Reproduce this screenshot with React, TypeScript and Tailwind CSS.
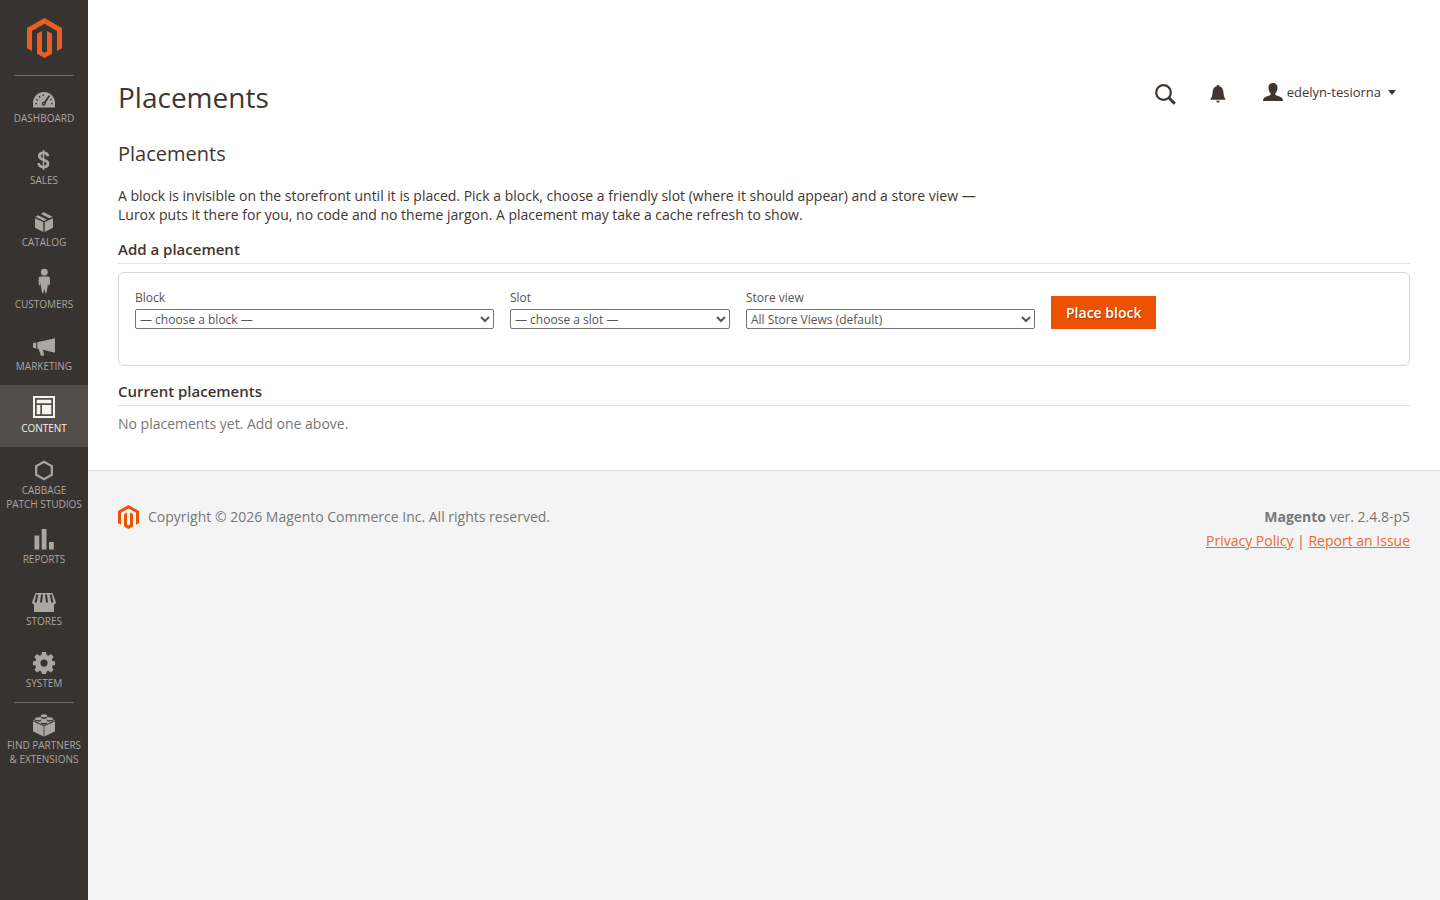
import type { ReactNode } from 'react';

type MenuItem = {
  id: string;
  label: string[];
  icon: ReactNode;
  active?: boolean;
  divider?: boolean;
};

const MENU: MenuItem[] = [
  {
    id: 'dashboard',
    label: ['Dashboard'],
    divider: true,
    icon: (
      <>
        <path d="M1 22.6V18a11 11 0 0 1 22 0v4.6z" />
        <g stroke="#373330" fill="none" strokeLinecap="round">
          <path d="M3.7 18.6h.8M4.7 14.6l.6.4M7.4 11.5l.4.6M11.2 10v.7M19.5 18.6h.8M19.2 14.3l-.5.4" strokeWidth="1.3" />
          <path d="M17 11.2l-5.2 7.6" strokeWidth="1.7" />
        </g>
        <circle cx="11.8" cy="18.8" r="2" fill="#373330" />
        <circle cx="11.8" cy="18.8" r=".7" />
      </>
    ),
  },
  {
    id: 'sales',
    label: ['Sales'],
    icon: (
      <g fill="none" stroke="currentColor">
        <path d="M16 9.2C15.6 7 14 5.9 11.5 5.9 9 5.9 7.3 7 7.3 9c0 4.8 8.6 2.7 8.600 7.500 0 2.300-1.900 3.500-4.400 3.500-2.800 0-4.600-1.300-4.900-3.900" strokeWidth="2.8" />
        <path d="M11.500 3v20" strokeWidth="1.600" />
      </g>
    ),
  },
  {
    id: 'catalog',
    label: ['Catalog'],
    icon: (
      <>
        <path d="M3 9.300l8.300 3.800V23L3 18.700z" />
        <path d="M21 9.300l-8.300 3.800V23L21 18.700z" />
        <path d="M3.400 7.700L6.200 6.300l8.600 4.200-2.800 1.400z" />
        <path d="M8.800 5L12 3.200l8.600 4.500-3.200 1.600z" />
      </>
    ),
  },
  {
    id: 'customers',
    label: ['Customers'],
    icon: (
      <>
        <circle cx="12.300" cy="1.200" r="3.400" />
        <path d="M8.700 5.600h7.200c1.300 0 2 .8 2 2v6.200l-1.500.9-.3-3.200-.5 4.300-1.200 6.400h-1l-1.100-4.400-1.100 4.400h-1L9 15.800l-.5-4.300-.3 3.200-1.500-.9V7.600c0-1.200.7-2 2-2z" />
      </>
    ),
  },
  {
    id: 'marketing',
    label: ['Marketing'],
    icon: (
      <>
        <path d="M1 10.100l3.300-.6v5.900l-3.300-.6z" />
        <path d="M5.300 9.200L23 5.300v14.400L11 16.800l1.200 5.800-3.100.4-2.500-7.100-1.300-.3z" />
      </>
    ),
  },
  {
    id: 'content',
    label: ['Content'],
    active: true,
    icon: (
      <>
        <path d="M1 1h22v22H1zM3 3v18h18V3z" fillRule="evenodd" />
        <path d="M4.700 4.700h14.600v3.600H4.700zM4.700 10h3.600v9.300H4.700zM10 10h9.300v9.300H10z" />
      </>
    ),
  },
  {
    id: 'cabbage',
    label: ['Cabbage', 'Patch Studios'],
    icon: <path d="M12 4.700l7.800 4.400v8.700L12 22.200l-7.800-4.400V9.100z" fill="none" stroke="currentColor" strokeWidth="2.200" />,
  },
  {
    id: 'reports',
    label: ['Reports'],
    icon: <path d="M2.500 9.500h4.800v14H2.500zM9.700 3h4.800v20.500H9.700zM17 16h4.800v7.500H17z" />,
  },
  {
    id: 'stores',
    label: ['Stores'],
    icon: (
      <>
        <path d="M3.500 5h17L24 14.200c-.3 1.500-1 2-2 2V24H2v-7.800c-1 0-1.700-.5-2-2z" />
        <path d="M5.400 6.500L3.500 14.500M10 6.500L9 14.500M14 6.500l1 8M18.600 6.500l1.900 8" fill="none" stroke="#373330" strokeWidth="2" />
      </>
    ),
  },
  {
    id: 'system',
    label: ['System'],
    icon: (
      <path
        fillRule="evenodd"
        d="M10 2h4l.7 3.100 1.500.7 2.700-1.800 2.800 2.800-1.800 2.700.6 1.500L23.100 11.600v3.300l-2.600.6-.6 1.500 1.800 2.700-2.800 2.800-2.700-1.700-1.500.6L14 24h-4l-.7-2.600-1.500-.6-2.700 1.700-2.800-2.800L4.100 17l-.6-1.500L.9 14.900v-3.300l2.600-.6.6-1.500L2.300 6.800 5.100 4l2.700 1.800 1.500-.7zM12 9.500a3.600 3.600 0 1 0 0 7.200 3.600 3.600 0 0 0 0-7.200z"
      />
    ),
  },
  {
    id: 'partners',
    label: ['Find Partners', '& Extensions'],
    divider: true,
    icon: (
      <>
        <path d="M1 9.200l10.600 5v10.300L1 19.200z" />
        <path d="M23 9.200l-10.600 5v10.300L23 19.200z" />
        <path d="M1.200 8.200L12 3.200l10.800 5L12 13.400z" />
        <g fill="#373330">
          <ellipse cx="12" cy="5.200" rx="3.200" ry="1.500" />
          <ellipse cx="6.200" cy="8" rx="3.200" ry="1.500" />
          <ellipse cx="17.800" cy="8" rx="3.200" ry="1.500" />
          <ellipse cx="12" cy="10.900" rx="3.200" ry="1.500" />
        </g>
        <ellipse cx="12" cy="3.800" rx="3.200" ry="1.500" />
        <ellipse cx="6.200" cy="6.700" rx="3.200" ry="1.500" />
        <ellipse cx="17.800" cy="6.700" rx="3.200" ry="1.500" />
        <ellipse cx="12" cy="9.600" rx="3.200" ry="1.500" />
      </>
    ),
  },
];

function Sidebar() {
  return (
    <nav aria-label="Main" className="w-[88px] shrink-0 bg-[#373330]">
      <a href="#home" aria-label="Magento Admin Panel" className="flex h-[75px] justify-center pt-[18px]">
        <svg viewBox="0 0 105 120" className="h-10 w-[35px]" fill="#eb5e23">
          <path d="M52.500 0L105 30v61l-15 8V39L52.500 17.500 15 39v60L0 91V30z" />
          <path d="M30 47l15-8v61l7.500 4.500L60 100V39l15 8v60l-22.500 13L30 107z" />
        </svg>
      </a>
      <ul>
        {MENU.map((item) => (
          <li key={item.id} className="min-h-[62px]">
            {item.divider && <div className="mx-3.5 -mb-px h-px bg-[#736963]" />}
            <a
              href={`#${item.id}`}
              aria-current={item.active ? 'page' : undefined}
              className={`flex min-h-[62px] flex-col items-center pt-2.5 pb-[5px] text-center text-[10px] leading-[14px] uppercase ${
                item.active ? 'bg-[#524d49] text-[#f7f3eb]' : 'text-[#aaa6a0]'
              }`}
            >
              <svg viewBox="0 0 24 24" className="mb-0.5 size-6 shrink-0 overflow-visible" fill="currentColor" aria-hidden="true">
                {item.icon}
              </svg>
              {item.label.map((line) => (
                <span key={line} className="whitespace-nowrap">{line}</span>
              ))}
            </a>
          </li>
        ))}
      </ul>
    </nav>
  );
}

function HeaderActions() {
  return (
    <div className="flex items-center pr-3.5 text-[#41362f]">
      <button type="button" aria-label="Search" className="mr-[34px]">
        <svg viewBox="0 0 21 21" className="size-[21px]" fill="none" stroke="currentColor">
          <circle cx="8.500" cy="8.500" r="7.300" strokeWidth="2.200" />
          <path d="M13.800 13.800l6 6" strokeWidth="3" />
        </svg>
      </button>
      <button type="button" aria-label="Notifications" className="mr-[37px]">
        <svg viewBox="0 0 16 18" className="h-[18px] w-4" fill="currentColor">
          <path d="M8 0c.9 0 1.300.5 1.400 1.200C12 2 13.200 4 13.400 7c.2 3.500.7 5.500 2.400 7.700H.2C1.900 12.500 2.400 10.500 2.600 7 2.800 4 4 2 6.600 1.200 6.700.5 7.100 0 8 0z" />
          <path d="M5.800 15.800h4.400L8 18z" />
        </svg>
      </button>
      <button type="button" className="flex items-center pb-1 text-[13px] leading-[18px]">
        <svg viewBox="0 0 20 18" className="mr-1 h-[18px] w-5" fill="currentColor" aria-hidden="true">
          <path d="M10 0c2.800 0 4.500 1.700 4.500 4.500 0 2.700-.9 4.700-2.200 5.700v1.200c.4.900 1.900 1.300 4.200 2.100 2.400.8 3.300 1.700 3.500 4.500H0c.2-2.800 1.100-3.700 3.500-4.500 2.300-.8 3.800-1.200 4.200-2.100v-1.200c-1.300-1-2.200-3-2.200-5.700C5.500 1.700 7.200 0 10 0z" />
        </svg>
        edelyn-tesiorna
        <svg viewBox="0 0 8 5" className="ml-[7px] h-[5px] w-2" fill="currentColor" aria-hidden="true">
          <path d="M0 0h8L4 5z" />
        </svg>
      </button>
    </div>
  );
}

function SelectField({ id, label, option, width }: { id: string; label: string; option: string; width: string }) {
  return (
    <div className={width}>
      <label htmlFor={id} className="mb-0.5 block text-xs leading-[18px]">
        {label}
      </label>
      <select id={id} className="block h-5 w-full rounded-[2px] border border-[#767676] bg-white text-xs">
        <option>{option}</option>
      </select>
    </div>
  );
}

function SectionTitle({ children }: { children: ReactNode }) {
  return (
    <h3 className="border-b border-[#e3e3e3] pb-1 text-[15px] leading-5 font-semibold text-[#41362f]">{children}</h3>
  );
}

export default function App() {
  return (
    <div className="flex min-h-screen bg-white font-['Open_Sans',sans-serif] text-sm text-[#41362f]">
      <Sidebar />
      <div className="flex min-w-0 flex-1 flex-col">
        <header className="flex items-start justify-between px-[30px] pt-[79px]">
          <h1 className="text-[28px] leading-9">Placements</h1>
          <div className="pt-1">
            <HeaderActions />
          </div>
        </header>

        <main className="px-[30px] pt-[25px] pb-9">
          <h2 className="text-xl leading-7">Placements</h2>
          <p className="mt-[18px] max-w-[860px] leading-[19px]">
            A block is invisible on the storefront until it is placed. Pick a block, choose a friendly slot (where it
            should appear) and a store view — Lurox puts it there for you, no code and no theme jargon. A placement may
            take a cache refresh to show.
          </p>

          <div className="mt-[15px]">
            <SectionTitle>Add a placement</SectionTitle>
          </div>
          <form
            onSubmit={(e) => e.preventDefault()}
            className="mt-2 flex items-start gap-4 rounded-md border border-[#d9d9d9] px-4 pt-4 pb-9 text-[#555]"
          >
            <SelectField id="block" label="Block" option="— choose a block —" width="w-[359px]" />
            <SelectField id="slot" label="Slot" option="— choose a slot —" width="w-[220px]" />
            <SelectField id="store-view" label="Store view" option="All Store Views (default)" width="w-[289px]" />
            <button
              type="submit"
              className="mt-[7px] h-[33px] bg-[#eb5202] px-[15px] text-sm font-semibold whitespace-nowrap text-white [text-shadow:1px_1px_0_rgba(0,0,0,0.25)]"
            >
              Place block
            </button>
          </form>

          <div className="mt-[15px]">
            <SectionTitle>Current placements</SectionTitle>
          </div>
          <p className="mt-2 leading-5 text-[#777]">No placements yet. Add one above.</p>
        </main>

        <footer className="flex flex-1 items-start justify-between border-t border-[#d9d9d9] bg-[#f4f4f4] px-[30px] pt-[34px] text-[#777]">
          <p className="flex items-center gap-[9px] leading-6">
            <svg viewBox="0 0 21 24" className="h-6 w-[21px]" fill="#eb5202" aria-hidden="true">
              <path d="M10.500 0L21 6v12l-3 1.700V7.800l-7.500-4.300L3 7.800v11.900L0 18V6z" />
              <path d="M6 9.300l3-1.700v12l1.500.9 1.500-.9v-12l3 1.700v12.100L10.500 24 6 21.400z" />
              <path d="M9.900 8h1.200v11.500H9.900z" fill="#f4f4f4" />
            </svg>
            Copyright © 2026 Magento Commerce Inc. All rights reserved.
          </p>
          <div className="text-right leading-6">
            <p>
              <strong className="font-bold">Magento</strong> ver. 2.4.8-p5
            </p>
            <p>
              <a href="#privacy" className="text-[#ef672f] underline">Privacy Policy</a>
              {' | '}
              <a href="#report" className="text-[#ef672f] underline">Report an Issue</a>
            </p>
          </div>
        </footer>
      </div>
    </div>
  );
}
